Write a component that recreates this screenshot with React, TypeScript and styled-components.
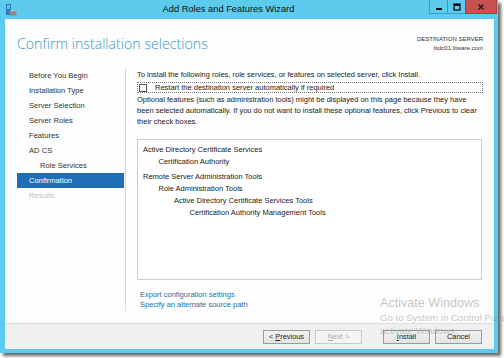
import React from "react";
import styled, { createGlobalStyle } from "styled-components";

const GlobalStyle = createGlobalStyle`
  html, body {
    margin: 0;
    padding: 0;
    background: #ffffff;
    width: 504px;
    height: 358px;
    overflow: hidden;
  }
  body {
    font-family: "Liberation Sans", Arial, sans-serif;
  }
`;

const Page = styled.div`
  position: relative;
  width: 504px;
  height: 358px;
`;

const Window = styled.div`
  width: 498px;
  height: 353px;
  background: #5ccbee;
  box-shadow: 3px 3px 3px rgba(0, 0, 0, 0.6);
  display: flex;
  flex-direction: column;
`;

const TitleBar = styled.div`
  height: 19px;
  display: flex;
  align-items: flex-start;
  position: relative;
`;

const AppIcon = styled.svg`
  margin: 4px 0 0 5px;
  width: 12px;
  height: 12px;
`;

const TitleText = styled.div`
  flex: 1;
  text-align: center;
  font-size: 9.3px;
  line-height: 19px;
  color: #111;
  padding-left: 10px;
`;

const Controls = styled.div`
  display: flex;
  height: 14px;
  margin-right: 1px;
`;

const CtlButton = styled.div<{ $close?: boolean; $w: number }>`
  width: ${(p) => p.$w}px;
  height: 13px;
  background: ${(p) => (p.$close ? "#c75050" : "#5ccbee")};
  border: 1px solid ${(p) => (p.$close ? "#a94040" : "#3a9cc0")};
  border-top: none;
  margin-left: -1px;
  display: flex;
  align-items: center;
  justify-content: center;
`;

const Client = styled.div`
  flex: 1;
  margin: 0 4px 4px 5px;
  background: #fdfdfd;
  display: flex;
  flex-direction: column;
`;

const Header = styled.div`
  height: 49px;
  display: flex;
  justify-content: space-between;
  padding: 0 11px 0 12px;
`;

const PageTitle = styled.div`
  font-family: "Open Sans", "Liberation Sans", sans-serif;
  font-weight: 300;
  font-size: 14.2px;
  line-height: 20px;
  color: #4096c2;
  padding-top: 15px;
`;

const DestBox = styled.div`
  padding-top: 16px;
  text-align: right;
  font-size: 6px;
  line-height: 8.5px;
  color: #333;
`;

const Body = styled.div`
  flex: 1;
  display: flex;
`;

const Nav = styled.div`
  width: 107px;
  margin: 0 0 12px 12px;
  border-right: 1px solid #dadada;
  padding-right: 1px;
  display: flex;
  flex-direction: column;
`;

const NavItem = styled.div<{ $active?: boolean; $disabled?: boolean; $indent?: boolean }>`
  height: 15px;
  line-height: 15px;
  font-size: 7.6px;
  padding-left: ${(p) => (p.$indent ? 23 : 12)}px;
  background: ${(p) => (p.$active ? "#1e6fb5" : "transparent")};
  color: ${(p) => (p.$active ? "#ffffff" : p.$disabled ? "#c4c4c4" : "#333333")};
`;

const Content = styled.div`
  flex: 1;
  padding: 1px 11px 0 11px;
  display: flex;
  flex-direction: column;
  font-size: 7.5px;
  color: #222;
`;

const Para = styled.div`
  line-height: 11px;
`;

const CheckRow = styled.label`
  margin-top: 2px;
  height: 9px;
  border: 1px dotted #777;
  display: flex;
  align-items: center;
  line-height: 9px;
`;

const CheckBox = styled.span`
  width: 8px;
  height: 8px;
  box-sizing: border-box;
  border: 1px solid #555;
  background: #fff;
  margin: 0 8px 0 1px;
`;

const OptText = styled.div`
  margin-top: 2px;
  line-height: 10.8px;
  white-space: nowrap;
`;

const ListBox = styled.div`
  margin-top: 12px;
  height: 135px;
  border: 1px solid #cfcfcf;
  background: #fff;
  margin-right: 1px;
  padding: 4px 0 0 5px;
`;

const Group = styled.div`
  margin-bottom: 3px;
`;

const ListItem = styled.div<{ $level: number }>`
  line-height: 12px;
  padding-left: ${(p) => p.$level * 15.5}px;
`;

const Links = styled.div`
  margin-top: 10px;
  padding-left: 3px;
  display: flex;
  flex-direction: column;
`;

const Link = styled.a`
  line-height: 10px;
  color: #1f6fa6;
  text-decoration: none;
`;

const Footer = styled.div`
  height: 26px;
  border-top: 1px solid #dcdcdc;
  background: #f0f0f0;
  display: flex;
  justify-content: flex-end;
  align-items: flex-start;
  padding: 6px 12px 0 0;
  box-sizing: border-box;
`;

const Btn = styled.button<{ $gap: number; $disabled?: boolean }>`
  width: 47px;
  height: 14px;
  margin-left: ${(p) => p.$gap}px;
  padding: 0;
  box-sizing: border-box;
  font-family: "Liberation Sans", Arial, sans-serif;
  font-size: 7.4px;
  line-height: 12px;
  color: ${(p) => (p.$disabled ? "#a8a8a8" : "#222")};
  background: ${(p) => (p.$disabled ? "#f4f4f4" : "linear-gradient(#f2f2f2, #e3e3e3)")};
  border: 1px solid ${(p) => (p.$disabled ? "#c8c8c8" : "#9a9a9a")};
  border-radius: 0;
  u {
    text-decoration: underline;
  }
`;

const Watermark = styled.div`
  position: absolute;
  left: 380px;
  top: 296px;
  color: rgba(150, 150, 150, 0.55);
  pointer-events: none;
  white-space: nowrap;
`;

const WmBig = styled.div`
  font-size: 12.6px;
  line-height: 15px;
`;

const WmSmall = styled.div`
  font-size: 9.6px;
  line-height: 13px;
`;

const groups: { text: string; level: number }[][] = [
  [
    { text: "Active Directory Certificate Services", level: 0 },
    { text: "Certification Authority", level: 1 },
  ],
  [
    { text: "Remote Server Administration Tools", level: 0 },
    { text: "Role Administration Tools", level: 1 },
    { text: "Active Directory Certificate Services Tools", level: 2 },
    { text: "Certification Authority Management Tools", level: 3 },
  ],
];

const navItems = [
  { label: "Before You Begin" },
  { label: "Installation Type" },
  { label: "Server Selection" },
  { label: "Server Roles" },
  { label: "Features" },
  { label: "AD CS" },
  { label: "Role Services", indent: true },
  { label: "Confirmation", active: true },
  { label: "Results", disabled: true },
];

export default function App() {
  return (
    <Page>
      <GlobalStyle />
      <Window>
        <TitleBar>
          <AppIcon viewBox="0 0 12 12">
            <rect x="1" y="0" width="5" height="11" fill="#2a7bc4" />
            <rect x="2" y="1.5" width="3" height="1" fill="#cfe6f7" />
            <rect x="2" y="3.5" width="3" height="1" fill="#cfe6f7" />
            <rect x="4.5" y="7" width="7" height="4.5" fill="#8a8a8a" />
            <rect x="5.5" y="6" width="5" height="1.5" fill="#b5b5b5" />
          </AppIcon>
          <TitleText>Add Roles and Features Wizard</TitleText>
          <Controls>
            <CtlButton $w={17}>
              <svg width="8" height="8" viewBox="0 0 8 8">
                <rect x="1" y="5" width="6" height="2" fill="#111" />
              </svg>
            </CtlButton>
            <CtlButton $w={17}>
              <svg width="8" height="8" viewBox="0 0 8 8">
                <rect x="1" y="1" width="6" height="6" fill="none" stroke="#111" strokeWidth="1.3" />
                <rect x="1" y="1" width="6" height="2" fill="#111" />
              </svg>
            </CtlButton>
            <CtlButton $w={30} $close>
              <svg width="8" height="8" viewBox="0 0 8 8">
                <path d="M1.5 1.5 L6.5 6.5 M6.5 1.5 L1.5 6.5" stroke="#222" strokeWidth="1.6" />
              </svg>
            </CtlButton>
          </Controls>
        </TitleBar>
        <Client>
          <Header>
            <PageTitle>Confirm installation selections</PageTitle>
            <DestBox>
              <div>DESTINATION SERVER</div>
              <div>litdc01.litware.com</div>
            </DestBox>
          </Header>
          <Body>
            <Nav>
              {navItems.map((n) => (
                <NavItem key={n.label} $active={n.active} $disabled={n.disabled} $indent={n.indent}>
                  {n.label}
                </NavItem>
              ))}
            </Nav>
            <Content>
              <Para>
                To install the following roles, role services, or features on selected server, click Install.
              </Para>
              <CheckRow>
                <CheckBox />
                Restart the destination server automatically if required
              </CheckRow>
              <OptText>
                Optional features (such as administration tools) might be displayed on this page because they have
                <br />
                been selected automatically. If you do not want to install these optional features, click Previous to clear
                <br />
                their check boxes.
              </OptText>
              <ListBox>
                {groups.map((g, i) => (
                  <Group key={i}>
                    {g.map((it) => (
                      <ListItem key={it.text} $level={it.level}>
                        {it.text}
                      </ListItem>
                    ))}
                  </Group>
                ))}
              </ListBox>
              <Links>
                <Link>Export configuration settings</Link>
                <Link>Specify an alternate source path</Link>
              </Links>
            </Content>
          </Body>
          <Footer>
            <Btn $gap={0}>
              &lt; <u>P</u>revious
            </Btn>
            <Btn $gap={5} $disabled>
              <u>N</u>ext &gt;
            </Btn>
            <Btn $gap={21}>
              <u>I</u>nstall
            </Btn>
            <Btn $gap={5}>Cancel</Btn>
          </Footer>
        </Client>
      </Window>
      <Watermark>
        <WmBig>Activate Windows</WmBig>
        <WmSmall>Go to System in Control Panel to</WmSmall>
        <WmSmall>activate Windows.</WmSmall>
      </Watermark>
    </Page>
  );
}
